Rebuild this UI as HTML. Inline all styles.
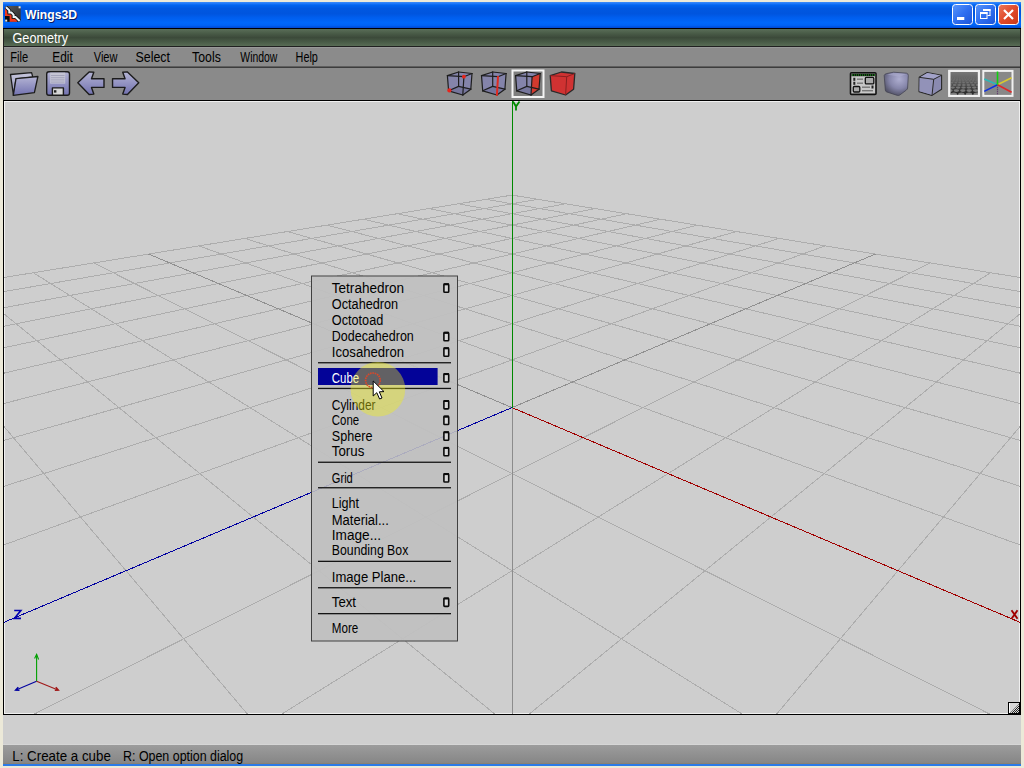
<!DOCTYPE html><html><head><meta charset="utf-8"><style>
html,body{margin:0;padding:0;width:1024px;height:768px;overflow:hidden;background:#ECE9D8}
svg{display:block}
text{font-family:"Liberation Sans",sans-serif}
</style></head><body>
<svg width="1024" height="768" viewBox="0 0 1024 768">
<defs>
<linearGradient id="gTitle" x1="0" y1="0" x2="0" y2="1">
<stop offset="0" stop-color="#3C8CF8"/><stop offset="0.06" stop-color="#1E78FA"/>
<stop offset="0.12" stop-color="#0064F0"/><stop offset="0.25" stop-color="#0057E0"/>
<stop offset="0.45" stop-color="#0055DE"/><stop offset="0.6" stop-color="#005EEE"/>
<stop offset="0.8" stop-color="#0068FA"/><stop offset="0.9" stop-color="#0062F4"/>
<stop offset="1" stop-color="#0048D0"/></linearGradient>
<linearGradient id="gGeom" x1="0" y1="0" x2="0" y2="1">
<stop offset="0" stop-color="#5A6E58"/><stop offset="0.25" stop-color="#4A5C48"/>
<stop offset="0.5" stop-color="#3C4A3A"/><stop offset="0.75" stop-color="#485A46"/>
<stop offset="1" stop-color="#586C55"/></linearGradient>
<linearGradient id="gStatus" x1="0" y1="0" x2="0" y2="1">
<stop offset="0" stop-color="#9c9c9c"/><stop offset="1" stop-color="#858585"/></linearGradient>
<linearGradient id="gMenu" x1="0" y1="0" x2="1" y2="1">
<stop offset="0" stop-color="#c4c4c4"/><stop offset="1" stop-color="#c8c8c8"/></linearGradient>
<linearGradient id="gBtn" x1="0" y1="0" x2="1" y2="1">
<stop offset="0" stop-color="#5a96fa"/><stop offset="0.5" stop-color="#2f6ff0"/><stop offset="1" stop-color="#1c54d8"/></linearGradient>
<linearGradient id="gClose" x1="0" y1="0" x2="1" y2="1">
<stop offset="0" stop-color="#ec7a5c"/><stop offset="0.5" stop-color="#e04a2a"/><stop offset="1" stop-color="#c83818"/></linearGradient>
<linearGradient id="gLav1" x1="0" y1="0" x2="0" y2="1">
<stop offset="0" stop-color="#c8c8dc"/><stop offset="1" stop-color="#8a8ab8"/></linearGradient>
<linearGradient id="gLav2" x1="0" y1="0" x2="0" y2="1">
<stop offset="0" stop-color="#b4b4d4"/><stop offset="1" stop-color="#7272b0"/></linearGradient>
<radialGradient id="gSmooth" cx="0.62" cy="0.3" r="0.8">
<stop offset="0" stop-color="#aeaed0"/><stop offset="0.5" stop-color="#8686aa"/><stop offset="1" stop-color="#444454"/></radialGradient>
<linearGradient id="gGround" x1="0" y1="0" x2="0" y2="1">
<stop offset="0" stop-color="#7a7a7a"/><stop offset="0.4" stop-color="#5e5e5e"/><stop offset="1" stop-color="#1e1e1e"/></linearGradient>
<clipPath id="gclip"><rect x="950.3" y="71.9" width="27.6" height="23"/></clipPath><pattern id="hatch" width="2" height="2" patternUnits="userSpaceOnUse"><rect width="2" height="2" fill="#d8d8d8"/><rect width="1" height="1" fill="#222"/><rect x="1" y="1" width="1" height="1" fill="#222"/></pattern><linearGradient id="gIcon" x1="0" y1="0" x2="1" y2="1"><stop offset="0" stop-color="#5a5a5a"/><stop offset="1" stop-color="#2a2a2a"/></linearGradient><clipPath id="menuclip"><rect x="312" y="276.5" width="145" height="364"/></clipPath><clipPath id="vp"><rect x="4" y="101" width="1016" height="613"/></clipPath>
</defs>

<rect x="3" y="28" width="1018" height="687" fill="#202020"/>
<rect x="3" y="2" width="1018" height="26" fill="url(#gTitle)"/>
<rect x="3" y="28" width="1018" height="1" fill="#000"/>
<text x="26" y="20.3" font-size="13.5" font-weight="bold" fill="#0a1a60" textLength="52" lengthAdjust="spacingAndGlyphs">Wings3D</text>
<text x="25" y="19.3" font-size="13.5" font-weight="bold" fill="#fff" textLength="52" lengthAdjust="spacingAndGlyphs">Wings3D</text>
<rect x="4" y="29" width="1016" height="17" fill="url(#gGeom)"/>
<text x="12.5" y="43" font-size="14" fill="#fff" textLength="55.6" lengthAdjust="spacingAndGlyphs">Geometry</text>
<rect x="4" y="47" width="1016" height="20" fill="#8b8b8b"/>
<rect x="4" y="47" width="1016" height="1" fill="#999"/>
<rect x="4" y="66" width="1016" height="1" fill="#5e5e5e"/>
<rect x="4" y="67" width="1016" height="1" fill="#3c3c3c"/>
<text x="10.2" y="62" font-size="14" fill="#000" textLength="17.9" lengthAdjust="spacingAndGlyphs">File</text>
<text x="52.3" y="62" font-size="14" fill="#000" textLength="20.4" lengthAdjust="spacingAndGlyphs">Edit</text>
<text x="93.75" y="62" font-size="14" fill="#000" textLength="23.75" lengthAdjust="spacingAndGlyphs">View</text>
<text x="135.5" y="62" font-size="14" fill="#000" textLength="34.5" lengthAdjust="spacingAndGlyphs">Select</text>
<text x="192.1" y="62" font-size="14" fill="#000" textLength="28.7" lengthAdjust="spacingAndGlyphs">Tools</text>
<text x="240.3" y="62" font-size="14" fill="#000" textLength="37.1" lengthAdjust="spacingAndGlyphs">Window</text>
<text x="295.6" y="62" font-size="14" fill="#000" textLength="22.3" lengthAdjust="spacingAndGlyphs">Help</text>
<rect x="4" y="68" width="1016" height="32" fill="#8a8a8a"/>
<rect x="3" y="100" width="1018" height="615" fill="#000"/>
<rect x="4" y="101" width="1016" height="613" fill="#f0f0f0"/>
<rect x="5" y="102" width="1014" height="611" fill="#cecece"/>
<g clip-path="url(#vp)" shape-rendering="crispEdges"><line x1="512.00" y1="195.11" x2="-798.13" y2="407.60" stroke="#adadad" stroke-width="1.0"/><line x1="512.00" y1="195.11" x2="1822.13" y2="407.60" stroke="#adadad" stroke-width="1.0"/><line x1="537.94" y1="199.31" x2="-841.27" y2="437.70" stroke="#adadad" stroke-width="1.0"/><line x1="486.06" y1="199.31" x2="1865.27" y2="437.70" stroke="#adadad" stroke-width="1.0"/><line x1="565.58" y1="203.80" x2="-892.66" y2="473.56" stroke="#adadad" stroke-width="1.0"/><line x1="458.42" y1="203.80" x2="1916.66" y2="473.56" stroke="#adadad" stroke-width="1.0"/><line x1="595.10" y1="208.58" x2="-954.91" y2="517.00" stroke="#adadad" stroke-width="1.0"/><line x1="428.90" y1="208.58" x2="1978.91" y2="517.00" stroke="#adadad" stroke-width="1.0"/><line x1="626.70" y1="213.71" x2="-1031.90" y2="570.72" stroke="#adadad" stroke-width="1.0"/><line x1="397.30" y1="213.71" x2="2055.90" y2="570.72" stroke="#adadad" stroke-width="1.0"/><line x1="660.59" y1="219.21" x2="-1129.53" y2="638.85" stroke="#adadad" stroke-width="1.0"/><line x1="363.41" y1="219.21" x2="2153.53" y2="638.85" stroke="#adadad" stroke-width="1.0"/><line x1="697.05" y1="225.12" x2="-1257.41" y2="728.08" stroke="#adadad" stroke-width="1.0"/><line x1="326.95" y1="225.12" x2="2281.41" y2="728.08" stroke="#adadad" stroke-width="1.0"/><line x1="736.37" y1="231.50" x2="-1432.16" y2="850.02" stroke="#adadad" stroke-width="1.0"/><line x1="287.63" y1="231.50" x2="2456.16" y2="850.02" stroke="#adadad" stroke-width="1.0"/><line x1="778.91" y1="238.40" x2="-1685.35" y2="1026.69" stroke="#adadad" stroke-width="1.0"/><line x1="245.09" y1="238.40" x2="2709.35" y2="1026.69" stroke="#adadad" stroke-width="1.0"/><line x1="825.08" y1="245.89" x2="-2085.06" y2="1305.61" stroke="#adadad" stroke-width="1.0"/><line x1="198.92" y1="245.89" x2="3109.06" y2="1305.61" stroke="#adadad" stroke-width="1.0"/><line x1="930.32" y1="262.95" x2="-4531.67" y2="3012.83" stroke="#adadad" stroke-width="1.0"/><line x1="93.68" y1="262.95" x2="5555.67" y2="3012.83" stroke="#adadad" stroke-width="1.0"/><line x1="990.66" y1="272.74" x2="-13803.22" y2="9482.41" stroke="#adadad" stroke-width="1.0"/><line x1="33.34" y1="272.74" x2="14827.22" y2="9482.41" stroke="#adadad" stroke-width="1.0"/><line x1="1057.20" y1="283.53" x2="-32430.77" y2="27589.18" stroke="#adadad" stroke-width="1.0"/><line x1="-33.20" y1="283.53" x2="33454.77" y2="27589.18" stroke="#adadad" stroke-width="1.0"/><line x1="1130.95" y1="295.50" x2="-21972.66" y2="27589.18" stroke="#adadad" stroke-width="1.0"/><line x1="-106.95" y1="295.50" x2="22996.66" y2="27589.18" stroke="#adadad" stroke-width="1.0"/><line x1="1213.15" y1="308.83" x2="-11514.55" y2="27589.18" stroke="#adadad" stroke-width="1.0"/><line x1="-189.15" y1="308.83" x2="12538.55" y2="27589.18" stroke="#adadad" stroke-width="1.0"/><line x1="1305.34" y1="323.78" x2="-1056.44" y2="27589.18" stroke="#adadad" stroke-width="1.0"/><line x1="-281.34" y1="323.78" x2="2080.44" y2="27589.18" stroke="#adadad" stroke-width="1.0"/><line x1="1409.46" y1="340.67" x2="9401.67" y2="27589.18" stroke="#adadad" stroke-width="1.0"/><line x1="-385.46" y1="340.67" x2="-8377.67" y2="27589.18" stroke="#adadad" stroke-width="1.0"/><line x1="1527.98" y1="359.89" x2="19859.78" y2="27589.18" stroke="#adadad" stroke-width="1.0"/><line x1="-503.98" y1="359.89" x2="-18835.78" y2="27589.18" stroke="#adadad" stroke-width="1.0"/><line x1="1664.13" y1="381.97" x2="30317.88" y2="27589.18" stroke="#adadad" stroke-width="1.0"/><line x1="-640.13" y1="381.97" x2="-29293.88" y2="27589.18" stroke="#adadad" stroke-width="1.0"/><line x1="1822.13" y1="407.60" x2="40775.99" y2="27589.18" stroke="#adadad" stroke-width="1.0"/><line x1="-798.13" y1="407.60" x2="-39751.99" y2="27589.18" stroke="#adadad" stroke-width="1.0"/><line x1="148.65" y1="254.04" x2="512.00" y2="407.60" stroke="#909090" stroke-width="1.0"/><line x1="875.35" y1="254.04" x2="512.00" y2="407.60" stroke="#909090" stroke-width="1.0"/><line x1="512.00" y1="407.60" x2="512.00" y2="1741.51" stroke="#8c8c8c" stroke-width="1.0"/><line x1="512.00" y1="407.60" x2="64829.10" y2="27589.18" stroke="#a00000" stroke-width="1.0"/><line x1="512.00" y1="407.60" x2="-63805.10" y2="27589.18" stroke="#0000a0" stroke-width="1.0"/><line x1="512.00" y1="407.60" x2="512.00" y2="-124598.04" stroke="#008800" stroke-width="1.0"/></g>
<g font-family="Liberation Sans" font-weight="bold">
<path d="M513 101.5 L516 106.5 L519.5 101.5 M516 106.5 V110.5" fill="none" stroke="#008a00" stroke-width="1.8"/>
<path d="M1011.5 610.3 L1017.5 618.7 M1017.5 610.3 L1011.5 618.7" fill="none" stroke="#a00000" stroke-width="1.9"/>
<path d="M14.2 610.5 H20.8 L14.5 618.3 H21" fill="none" stroke="#0000b0" stroke-width="1.7"/>
</g>
<g stroke-width="1.1" fill="none">
<path d="M36.6 681.2 V654.5" stroke="#00a000"/><path d="M34.6 658.5 L36.6 654.3 L38.6 659.5" stroke="#00a000" stroke-width="1.1"/>
<path d="M36.6 681.2 L16 690" stroke="#0000a0"/><path d="M18.3 687.3 L15.8 690 L19.5 690.2" stroke="#0000a0" stroke-width="1.6"/>
<path d="M36.6 681.2 L58 690" stroke="#a01818"/><path d="M54.8 690.2 L58.2 690 L55.8 687.3" stroke="#a01818" stroke-width="1.6"/>
</g>
<rect x="1008" y="702" width="12" height="12" fill="#000"/><rect x="1009" y="703" width="10" height="10" fill="#d8d8d8"/><rect x="1009" y="703" width="1" height="10" fill="#fff"/><polygon points="1019,704 1019,713 1010,713" fill="url(#hatch)"/>
<rect x="3" y="715" width="1018" height="30" fill="#cfcfcf"/>
<rect x="3" y="744" width="1018" height="1" fill="#d6d6d6"/>
<rect x="3" y="745" width="1018" height="19" fill="url(#gStatus)"/>
<rect x="3" y="763.5" width="1018" height="0.7" fill="#8a7a60"/>
<rect x="3" y="764" width="1018" height="2" fill="#2a7ae8"/>
<text x="12.3" y="760.6" font-size="14" fill="#000" textLength="98.5" lengthAdjust="spacingAndGlyphs">L: Create a cube</text>
<text x="123" y="760.6" font-size="14" fill="#000" textLength="120.2" lengthAdjust="spacingAndGlyphs">R: Open option dialog</text>
<g>
<rect x="5" y="6.1" width="15.7" height="15.6" rx="2" fill="url(#gIcon)"/>
<path d="M5 9 H7 V13.6 H11.6 V18.6 H17 V21.7 H9.5 V16 H5 Z" fill="#f0381c"/>
<rect x="5" y="16" width="4.5" height="5.7" fill="#0c0c0c"/>
<path d="M6 7.2 L9.3 10.4 V12.6 H11.5 L13.6 14.8 V17 H15.5 L19.6 21" fill="none" stroke="#101010" stroke-width="3.6" stroke-linejoin="miter"/>
<path d="M6 7.2 L9.3 10.4 V12.6 H11.5 L13.6 14.8 V17 H15.5 L19.6 21" fill="none" stroke="#eef4f8" stroke-width="2" stroke-linejoin="miter"/>
<rect x="18.6" y="6.3" width="2" height="2" fill="#e8e8e8"/>
<rect x="5.2" y="19.6" width="2" height="2" fill="#e8e8e8"/>
</g>
<g><rect x="952.5" y="4.5" width="20" height="20" rx="3" fill="url(#gBtn)" stroke="#fff" stroke-width="1"/><rect x="957" y="17" width="7.3" height="3" fill="#fff"/></g>
<g><rect x="975.5" y="4.5" width="20" height="20" rx="3" fill="url(#gBtn)" stroke="#fff" stroke-width="1"/><rect x="980.5" y="12.5" width="6.5" height="6" fill="none" stroke="#fff" stroke-width="1"/><rect x="980" y="12" width="7.5" height="2" fill="#fff"/><rect x="983" y="9" width="7.5" height="2" fill="#fff"/><rect x="989.5" y="9" width="1" height="6.5" fill="#fff"/><rect x="987.5" y="15" width="3" height="1" fill="#fff"/></g>
<g><rect x="998.5" y="4.5" width="20" height="20" rx="3" fill="url(#gClose)" stroke="#fff" stroke-width="1"/><path d="M1004 10 L1013 19 M1013 10 L1004 19" stroke="#fff" stroke-width="2.2"/></g>
<g stroke="#1c1c1c" stroke-linejoin="round">
<polygon points="10.5,74.5 31.6,72.6 32.8,77.2 16,78.8 13.5,95.3" fill="url(#gLav1)" stroke-width="1.3"/>
<polygon points="16,78.6 37.9,76.5 34.4,92.6 13.3,95.3" fill="url(#gLav2)" stroke-width="1.3"/>
<rect x="46.7" y="71.7" width="22.8" height="23.6" rx="2.2" fill="url(#gLav2)" stroke-width="1.4"/>
<rect x="50.2" y="72.6" width="15" height="11" fill="#c4c4d4" stroke="none"/>
<path d="M51 75.5 H64.5 M51 77.7 H64.5 M51 79.9 H64.5 M51 82.1 H64.5" stroke="#9a9ab4" stroke-width="0.8"/>
<rect x="52.4" y="87.9" width="11" height="7.4" fill="#d6d6d6" stroke-width="1.4"/>
<rect x="54" y="90.2" width="2.4" height="2.4" fill="#222" stroke="none"/>
<polygon points="77.8,82.75 89.1,71.9 93.8,72.3 91.5,78.8 104,78.8 104,87.4 91.5,87.4 93.8,94.1 89.1,94.5" fill="url(#gLav2)" stroke-width="1.4"/>
<polygon points="138.75,82.75 127.45,71.9 122.75,72.3 125.05,78.8 112.55,78.8 112.55,87.4 125.05,87.4 122.75,94.1 127.45,94.5" fill="url(#gLav2)" stroke-width="1.4"/>
</g>
<rect x="512.5" y="70.5" width="31" height="26.5" fill="#7e7e7e" stroke="#f4f4f4" stroke-width="2"/>
<polygon points="447.4,75.6 458.6,72.0 472.0,73.5 470.8,89.2 462.8,95.0 448.6,90.8" fill="#8484aa" stroke="none"/><polygon points="448.6,90.8 458.6,86.4 470.8,89.2 462.8,95.0" fill="#76769c" stroke="none"/><line x1="447.4" y1="75.6" x2="458.6" y2="72.0" stroke="#1e1e1e" stroke-width="1.2" stroke-linecap="round"/><line x1="458.6" y1="72.0" x2="472.0" y2="73.5" stroke="#1e1e1e" stroke-width="1.2" stroke-linecap="round"/><line x1="472.0" y1="73.5" x2="463.9" y2="76.7" stroke="#1e1e1e" stroke-width="1.2" stroke-linecap="round"/><line x1="463.9" y1="76.7" x2="447.4" y2="75.6" stroke="#1e1e1e" stroke-width="1.2" stroke-linecap="round"/><line x1="448.6" y1="90.8" x2="458.6" y2="86.4" stroke="#1e1e1e" stroke-width="1.2" stroke-linecap="round"/><line x1="458.6" y1="86.4" x2="470.8" y2="89.2" stroke="#1e1e1e" stroke-width="1.2" stroke-linecap="round"/><line x1="470.8" y1="89.2" x2="462.8" y2="95.0" stroke="#1e1e1e" stroke-width="1.2" stroke-linecap="round"/><line x1="462.8" y1="95.0" x2="448.6" y2="90.8" stroke="#1e1e1e" stroke-width="1.2" stroke-linecap="round"/><line x1="447.4" y1="75.6" x2="448.6" y2="90.8" stroke="#1e1e1e" stroke-width="1.2" stroke-linecap="round"/><line x1="458.6" y1="72.0" x2="458.6" y2="86.4" stroke="#1e1e1e" stroke-width="1.2" stroke-linecap="round"/><line x1="472.0" y1="73.5" x2="470.8" y2="89.2" stroke="#1e1e1e" stroke-width="1.2" stroke-linecap="round"/><line x1="463.9" y1="76.7" x2="462.8" y2="95.0" stroke="#1e1e1e" stroke-width="1.2" stroke-linecap="round"/><circle cx="463.9" cy="76.7" r="1.9" fill="#e8241c"/><circle cx="449.40000000000003" cy="90.39999999999999" r="2.1" fill="#e8241c"/>
<polygon points="481.5,75.6 492.7,72.0 506.1,73.5 504.9,89.2 496.9,95.0 482.7,90.8" fill="#8484aa" stroke="none"/><polygon points="482.7,90.8 492.7,86.4 504.9,89.2 496.9,95.0" fill="#76769c" stroke="none"/><line x1="481.5" y1="75.6" x2="492.7" y2="72.0" stroke="#1e1e1e" stroke-width="1.2" stroke-linecap="round"/><line x1="492.7" y1="72.0" x2="506.1" y2="73.5" stroke="#1e1e1e" stroke-width="1.2" stroke-linecap="round"/><line x1="506.1" y1="73.5" x2="498.0" y2="76.7" stroke="#1e1e1e" stroke-width="1.2" stroke-linecap="round"/><line x1="498.0" y1="76.7" x2="481.5" y2="75.6" stroke="#1e1e1e" stroke-width="1.2" stroke-linecap="round"/><line x1="482.7" y1="90.8" x2="492.7" y2="86.4" stroke="#1e1e1e" stroke-width="1.2" stroke-linecap="round"/><line x1="492.7" y1="86.4" x2="504.9" y2="89.2" stroke="#1e1e1e" stroke-width="1.2" stroke-linecap="round"/><line x1="504.9" y1="89.2" x2="496.9" y2="95.0" stroke="#1e1e1e" stroke-width="1.2" stroke-linecap="round"/><line x1="496.9" y1="95.0" x2="482.7" y2="90.8" stroke="#1e1e1e" stroke-width="1.2" stroke-linecap="round"/><line x1="481.5" y1="75.6" x2="482.7" y2="90.8" stroke="#1e1e1e" stroke-width="1.2" stroke-linecap="round"/><line x1="492.7" y1="72.0" x2="492.7" y2="86.4" stroke="#1e1e1e" stroke-width="1.2" stroke-linecap="round"/><line x1="506.1" y1="73.5" x2="504.9" y2="89.2" stroke="#1e1e1e" stroke-width="1.2" stroke-linecap="round"/><line x1="498.0" y1="76.7" x2="496.9" y2="95.0" stroke="#e02a20" stroke-width="2" stroke-linecap="round"/>
<polygon points="515.6,75.6 526.8,72.0 540.2,73.5 539.0,89.2 531.0,95.0 516.8,90.8" fill="#8484aa" stroke="none"/><polygon points="516.8,90.8 526.8,86.4 539.0,89.2 531.0,95.0" fill="#76769c" stroke="none"/><polygon points="532.1,76.7 540.2,73.5 539.0,89.2 531.0,95.0" fill="#d23a2e" stroke="none"/><line x1="515.6" y1="75.6" x2="526.8" y2="72.0" stroke="#1e1e1e" stroke-width="1.2" stroke-linecap="round"/><line x1="526.8" y1="72.0" x2="540.2" y2="73.5" stroke="#1e1e1e" stroke-width="1.2" stroke-linecap="round"/><line x1="540.2" y1="73.5" x2="532.1" y2="76.7" stroke="#1e1e1e" stroke-width="1.2" stroke-linecap="round"/><line x1="532.1" y1="76.7" x2="515.6" y2="75.6" stroke="#1e1e1e" stroke-width="1.2" stroke-linecap="round"/><line x1="516.8" y1="90.8" x2="526.8" y2="86.4" stroke="#1e1e1e" stroke-width="1.2" stroke-linecap="round"/><line x1="526.8" y1="86.4" x2="539.0" y2="89.2" stroke="#1e1e1e" stroke-width="1.2" stroke-linecap="round"/><line x1="539.0" y1="89.2" x2="531.0" y2="95.0" stroke="#1e1e1e" stroke-width="1.2" stroke-linecap="round"/><line x1="531.0" y1="95.0" x2="516.8" y2="90.8" stroke="#1e1e1e" stroke-width="1.2" stroke-linecap="round"/><line x1="515.6" y1="75.6" x2="516.8" y2="90.8" stroke="#1e1e1e" stroke-width="1.2" stroke-linecap="round"/><line x1="526.8" y1="72.0" x2="526.8" y2="86.4" stroke="#1e1e1e" stroke-width="1.2" stroke-linecap="round"/><line x1="540.2" y1="73.5" x2="539.0" y2="89.2" stroke="#1e1e1e" stroke-width="1.2" stroke-linecap="round"/><line x1="532.1" y1="76.7" x2="531.0" y2="95.0" stroke="#1e1e1e" stroke-width="1.2" stroke-linecap="round"/>
<polygon points="550.2,75.6 561.4,72.0 574.8,73.5 573.6,89.2 565.6,95.0 551.4,90.8" fill="#d03232" stroke="#2a2a2a" stroke-width="1.3" stroke-linejoin="round"/><polyline points="550.2,75.6 566.7,76.7 574.8,73.5" fill="none" stroke="#8a2020" stroke-width="1"/><line x1="566.6999999999999" y1="76.7" x2="565.6" y2="95" stroke="#8a2020" stroke-width="1"/>
<g>
<rect x="850.5" y="72.8" width="25.5" height="21.6" rx="1" fill="#c8c8c8" stroke="#111" stroke-width="1.6"/>
<rect x="851.5" y="73.6" width="23.5" height="2.6" fill="#111"/>
<line x1="852" y1="75" x2="875" y2="75" stroke="#1ec81e" stroke-width="1.2" stroke-dasharray="1 1"/>
<rect x="853.3" y="77.8" width="2" height="3" fill="#222"/><rect x="853.3" y="81.8" width="2" height="3" fill="#222"/>
<rect x="857" y="78.5" width="6" height="1.4" fill="#777"/><rect x="857" y="82.5" width="6" height="1.4" fill="#777"/>
<rect x="865.3" y="77.4" width="8.5" height="6.5" rx="1" fill="#aaa" stroke="#111" stroke-width="1.3"/>
<rect x="853.3" y="86.5" width="6.5" height="5.5" rx="1" fill="#aaa" stroke="#111" stroke-width="1.3"/>
<rect x="862" y="86.5" width="8" height="1.4" fill="#777"/><rect x="862" y="90" width="11" height="1.4" fill="#777"/>
<rect x="871.5" y="85.5" width="2" height="3" fill="#222"/>
<path d="M884.2 75.5 Q884.4 74.2 886.5 73.6 L893.7 72.2 L906.5 73.2 Q908.3 73.5 908.3 75.5 L907.6 88 Q907.5 89.2 906.4 90 L899.8 95 Q898.6 95.8 897.4 95.4 L886.8 92 Q885.4 91.5 885.3 90 Z" fill="url(#gSmooth)" stroke="#404050" stroke-width="0.9" stroke-opacity="0.8"/>
<path d="M887 74.6 L893.8 73 L906.5 74 L899.5 76.8 Z" fill="#b4b4d4" fill-opacity="0.45"/>
<polygon points="919.2,77.3 927.2,72.5 941.6,75.2 941.6,89.2 932,95.4 919,91.6" fill="#8a8ab0" stroke="#282828" stroke-width="1.1" stroke-linejoin="round"/>
<polygon points="919.6,77.6 933.6,79.5 932.1,94.9 919.4,91.3" fill="#9292b8"/>
<polygon points="920,77.2 927.3,73 941,75.6 933.7,79" fill="#a2a2c8"/>
<path d="M919.2 77.3 L933.7 79.3 L941.6 75.2 M933.7 79.3 L932 95.4" fill="none" stroke="#2a2a2a" stroke-width="1"/>
<rect x="949.3" y="70.9" width="29.6" height="25" fill="url(#gGround)" stroke="#f0f0f0" stroke-width="2"/>
<g clip-path="url(#gclip)"><ellipse cx="953.80" cy="94.30" rx="3.19" ry="1.70" fill="#9a9a9a" fill-opacity="0.75"/><ellipse cx="961.40" cy="94.30" rx="3.19" ry="1.70" fill="#9a9a9a" fill-opacity="0.75"/><ellipse cx="969.00" cy="94.30" rx="3.19" ry="1.70" fill="#9a9a9a" fill-opacity="0.75"/><ellipse cx="976.60" cy="94.30" rx="3.19" ry="1.70" fill="#9a9a9a" fill-opacity="0.75"/><ellipse cx="950.00" cy="90.60" rx="2.69" ry="1.40" fill="#9a9a9a" fill-opacity="0.7"/><ellipse cx="956.40" cy="90.60" rx="2.69" ry="1.40" fill="#9a9a9a" fill-opacity="0.7"/><ellipse cx="962.80" cy="90.60" rx="2.69" ry="1.40" fill="#9a9a9a" fill-opacity="0.7"/><ellipse cx="969.20" cy="90.60" rx="2.69" ry="1.40" fill="#9a9a9a" fill-opacity="0.7"/><ellipse cx="975.60" cy="90.60" rx="2.69" ry="1.40" fill="#9a9a9a" fill-opacity="0.7"/><ellipse cx="982.00" cy="90.60" rx="2.69" ry="1.40" fill="#9a9a9a" fill-opacity="0.7"/><ellipse cx="952.70" cy="87.60" rx="2.27" ry="1.15" fill="#9a9a9a" fill-opacity="0.6"/><ellipse cx="958.10" cy="87.60" rx="2.27" ry="1.15" fill="#9a9a9a" fill-opacity="0.6"/><ellipse cx="963.50" cy="87.60" rx="2.27" ry="1.15" fill="#9a9a9a" fill-opacity="0.6"/><ellipse cx="968.90" cy="87.60" rx="2.27" ry="1.15" fill="#9a9a9a" fill-opacity="0.6"/><ellipse cx="974.30" cy="87.60" rx="2.27" ry="1.15" fill="#9a9a9a" fill-opacity="0.6"/><ellipse cx="979.70" cy="87.60" rx="2.27" ry="1.15" fill="#9a9a9a" fill-opacity="0.6"/><ellipse cx="950.00" cy="85.00" rx="1.93" ry="0.95" fill="#9a9a9a" fill-opacity="0.5"/><ellipse cx="954.60" cy="85.00" rx="1.93" ry="0.95" fill="#9a9a9a" fill-opacity="0.5"/><ellipse cx="959.20" cy="85.00" rx="1.93" ry="0.95" fill="#9a9a9a" fill-opacity="0.5"/><ellipse cx="963.80" cy="85.00" rx="1.93" ry="0.95" fill="#9a9a9a" fill-opacity="0.5"/><ellipse cx="968.40" cy="85.00" rx="1.93" ry="0.95" fill="#9a9a9a" fill-opacity="0.5"/><ellipse cx="973.00" cy="85.00" rx="1.93" ry="0.95" fill="#9a9a9a" fill-opacity="0.5"/><ellipse cx="977.60" cy="85.00" rx="1.93" ry="0.95" fill="#9a9a9a" fill-opacity="0.5"/><ellipse cx="982.20" cy="85.00" rx="1.93" ry="0.95" fill="#9a9a9a" fill-opacity="0.5"/><ellipse cx="951.95" cy="82.80" rx="1.64" ry="0.80" fill="#9a9a9a" fill-opacity="0.4"/><ellipse cx="955.85" cy="82.80" rx="1.64" ry="0.80" fill="#9a9a9a" fill-opacity="0.4"/><ellipse cx="959.75" cy="82.80" rx="1.64" ry="0.80" fill="#9a9a9a" fill-opacity="0.4"/><ellipse cx="963.65" cy="82.80" rx="1.64" ry="0.80" fill="#9a9a9a" fill-opacity="0.4"/><ellipse cx="967.55" cy="82.80" rx="1.64" ry="0.80" fill="#9a9a9a" fill-opacity="0.4"/><ellipse cx="971.45" cy="82.80" rx="1.64" ry="0.80" fill="#9a9a9a" fill-opacity="0.4"/><ellipse cx="975.35" cy="82.80" rx="1.64" ry="0.80" fill="#9a9a9a" fill-opacity="0.4"/><ellipse cx="979.25" cy="82.80" rx="1.64" ry="0.80" fill="#9a9a9a" fill-opacity="0.4"/><ellipse cx="950.00" cy="80.90" rx="1.39" ry="0.65" fill="#9a9a9a" fill-opacity="0.3"/><ellipse cx="953.30" cy="80.90" rx="1.39" ry="0.65" fill="#9a9a9a" fill-opacity="0.3"/><ellipse cx="956.60" cy="80.90" rx="1.39" ry="0.65" fill="#9a9a9a" fill-opacity="0.3"/><ellipse cx="959.90" cy="80.90" rx="1.39" ry="0.65" fill="#9a9a9a" fill-opacity="0.3"/><ellipse cx="963.20" cy="80.90" rx="1.39" ry="0.65" fill="#9a9a9a" fill-opacity="0.3"/><ellipse cx="966.50" cy="80.90" rx="1.39" ry="0.65" fill="#9a9a9a" fill-opacity="0.3"/><ellipse cx="969.80" cy="80.90" rx="1.39" ry="0.65" fill="#9a9a9a" fill-opacity="0.3"/><ellipse cx="973.10" cy="80.90" rx="1.39" ry="0.65" fill="#9a9a9a" fill-opacity="0.3"/><ellipse cx="976.40" cy="80.90" rx="1.39" ry="0.65" fill="#9a9a9a" fill-opacity="0.3"/><ellipse cx="979.70" cy="80.90" rx="1.39" ry="0.65" fill="#9a9a9a" fill-opacity="0.3"/><ellipse cx="951.40" cy="79.30" rx="1.18" ry="0.55" fill="#9a9a9a" fill-opacity="0.25"/><ellipse cx="954.20" cy="79.30" rx="1.18" ry="0.55" fill="#9a9a9a" fill-opacity="0.25"/><ellipse cx="957.00" cy="79.30" rx="1.18" ry="0.55" fill="#9a9a9a" fill-opacity="0.25"/><ellipse cx="959.80" cy="79.30" rx="1.18" ry="0.55" fill="#9a9a9a" fill-opacity="0.25"/><ellipse cx="962.60" cy="79.30" rx="1.18" ry="0.55" fill="#9a9a9a" fill-opacity="0.25"/><ellipse cx="965.40" cy="79.30" rx="1.18" ry="0.55" fill="#9a9a9a" fill-opacity="0.25"/><ellipse cx="968.20" cy="79.30" rx="1.18" ry="0.55" fill="#9a9a9a" fill-opacity="0.25"/><ellipse cx="971.00" cy="79.30" rx="1.18" ry="0.55" fill="#9a9a9a" fill-opacity="0.25"/><ellipse cx="973.80" cy="79.30" rx="1.18" ry="0.55" fill="#9a9a9a" fill-opacity="0.25"/><ellipse cx="976.60" cy="79.30" rx="1.18" ry="0.55" fill="#9a9a9a" fill-opacity="0.25"/><ellipse cx="979.40" cy="79.30" rx="1.18" ry="0.55" fill="#9a9a9a" fill-opacity="0.25"/><ellipse cx="950.00" cy="77.90" rx="1.01" ry="0.50" fill="#9a9a9a" fill-opacity="0.2"/><ellipse cx="952.40" cy="77.90" rx="1.01" ry="0.50" fill="#9a9a9a" fill-opacity="0.2"/><ellipse cx="954.80" cy="77.90" rx="1.01" ry="0.50" fill="#9a9a9a" fill-opacity="0.2"/><ellipse cx="957.20" cy="77.90" rx="1.01" ry="0.50" fill="#9a9a9a" fill-opacity="0.2"/><ellipse cx="959.60" cy="77.90" rx="1.01" ry="0.50" fill="#9a9a9a" fill-opacity="0.2"/><ellipse cx="962.00" cy="77.90" rx="1.01" ry="0.50" fill="#9a9a9a" fill-opacity="0.2"/><ellipse cx="964.40" cy="77.90" rx="1.01" ry="0.50" fill="#9a9a9a" fill-opacity="0.2"/><ellipse cx="966.80" cy="77.90" rx="1.01" ry="0.50" fill="#9a9a9a" fill-opacity="0.2"/><ellipse cx="969.20" cy="77.90" rx="1.01" ry="0.50" fill="#9a9a9a" fill-opacity="0.2"/><ellipse cx="971.60" cy="77.90" rx="1.01" ry="0.50" fill="#9a9a9a" fill-opacity="0.2"/><ellipse cx="974.00" cy="77.90" rx="1.01" ry="0.50" fill="#9a9a9a" fill-opacity="0.2"/><ellipse cx="976.40" cy="77.90" rx="1.01" ry="0.50" fill="#9a9a9a" fill-opacity="0.2"/><ellipse cx="978.80" cy="77.90" rx="1.01" ry="0.50" fill="#9a9a9a" fill-opacity="0.2"/><ellipse cx="981.20" cy="77.90" rx="1.01" ry="0.50" fill="#9a9a9a" fill-opacity="0.2"/></g>
<rect x="949.3" y="70.9" width="29.6" height="25" fill="none" stroke="#f0f0f0" stroke-width="2"/>
<rect x="983.3" y="70.9" width="29.2" height="25" fill="#888" stroke="#f0f0f0" stroke-width="2"/>
<line x1="997.5" y1="84.75" x2="997.5" y2="95" stroke="#5a2a6a" stroke-width="1.2" stroke-dasharray="1 1"/>
<line x1="997.5" y1="84.75" x2="984.2" y2="78.9" stroke="#2ab8b8" stroke-width="1.6"/>
<line x1="997.5" y1="84.75" x2="1011.6" y2="77.7" stroke="#d8c830" stroke-width="1.6"/>
<line x1="997.5" y1="84.75" x2="984.2" y2="91.4" stroke="#1030e0" stroke-width="1.6"/>
<line x1="997.5" y1="84.75" x2="1011.6" y2="92.2" stroke="#e02828" stroke-width="1.6"/>
<line x1="997.5" y1="84.75" x2="997.5" y2="71.5" stroke="#10d010" stroke-width="1.6"/>
</g>
<rect x="311.5" y="276" width="146" height="365" fill="#c2c2c2" stroke="#404040" stroke-width="1"/>
<g clip-path="url(#menuclip)" opacity="0.11" shape-rendering="crispEdges"><line x1="512.00" y1="195.11" x2="-798.13" y2="407.60" stroke="#adadad" stroke-width="1.0"/><line x1="512.00" y1="195.11" x2="1822.13" y2="407.60" stroke="#adadad" stroke-width="1.0"/><line x1="537.94" y1="199.31" x2="-841.27" y2="437.70" stroke="#adadad" stroke-width="1.0"/><line x1="486.06" y1="199.31" x2="1865.27" y2="437.70" stroke="#adadad" stroke-width="1.0"/><line x1="565.58" y1="203.80" x2="-892.66" y2="473.56" stroke="#adadad" stroke-width="1.0"/><line x1="458.42" y1="203.80" x2="1916.66" y2="473.56" stroke="#adadad" stroke-width="1.0"/><line x1="595.10" y1="208.58" x2="-954.91" y2="517.00" stroke="#adadad" stroke-width="1.0"/><line x1="428.90" y1="208.58" x2="1978.91" y2="517.00" stroke="#adadad" stroke-width="1.0"/><line x1="626.70" y1="213.71" x2="-1031.90" y2="570.72" stroke="#adadad" stroke-width="1.0"/><line x1="397.30" y1="213.71" x2="2055.90" y2="570.72" stroke="#adadad" stroke-width="1.0"/><line x1="660.59" y1="219.21" x2="-1129.53" y2="638.85" stroke="#adadad" stroke-width="1.0"/><line x1="363.41" y1="219.21" x2="2153.53" y2="638.85" stroke="#adadad" stroke-width="1.0"/><line x1="697.05" y1="225.12" x2="-1257.41" y2="728.08" stroke="#adadad" stroke-width="1.0"/><line x1="326.95" y1="225.12" x2="2281.41" y2="728.08" stroke="#adadad" stroke-width="1.0"/><line x1="736.37" y1="231.50" x2="-1432.16" y2="850.02" stroke="#adadad" stroke-width="1.0"/><line x1="287.63" y1="231.50" x2="2456.16" y2="850.02" stroke="#adadad" stroke-width="1.0"/><line x1="778.91" y1="238.40" x2="-1685.35" y2="1026.69" stroke="#adadad" stroke-width="1.0"/><line x1="245.09" y1="238.40" x2="2709.35" y2="1026.69" stroke="#adadad" stroke-width="1.0"/><line x1="825.08" y1="245.89" x2="-2085.06" y2="1305.61" stroke="#adadad" stroke-width="1.0"/><line x1="198.92" y1="245.89" x2="3109.06" y2="1305.61" stroke="#adadad" stroke-width="1.0"/><line x1="930.32" y1="262.95" x2="-4531.67" y2="3012.83" stroke="#adadad" stroke-width="1.0"/><line x1="93.68" y1="262.95" x2="5555.67" y2="3012.83" stroke="#adadad" stroke-width="1.0"/><line x1="990.66" y1="272.74" x2="-13803.22" y2="9482.41" stroke="#adadad" stroke-width="1.0"/><line x1="33.34" y1="272.74" x2="14827.22" y2="9482.41" stroke="#adadad" stroke-width="1.0"/><line x1="1057.20" y1="283.53" x2="-32430.77" y2="27589.18" stroke="#adadad" stroke-width="1.0"/><line x1="-33.20" y1="283.53" x2="33454.77" y2="27589.18" stroke="#adadad" stroke-width="1.0"/><line x1="1130.95" y1="295.50" x2="-21972.66" y2="27589.18" stroke="#adadad" stroke-width="1.0"/><line x1="-106.95" y1="295.50" x2="22996.66" y2="27589.18" stroke="#adadad" stroke-width="1.0"/><line x1="1213.15" y1="308.83" x2="-11514.55" y2="27589.18" stroke="#adadad" stroke-width="1.0"/><line x1="-189.15" y1="308.83" x2="12538.55" y2="27589.18" stroke="#adadad" stroke-width="1.0"/><line x1="1305.34" y1="323.78" x2="-1056.44" y2="27589.18" stroke="#adadad" stroke-width="1.0"/><line x1="-281.34" y1="323.78" x2="2080.44" y2="27589.18" stroke="#adadad" stroke-width="1.0"/><line x1="1409.46" y1="340.67" x2="9401.67" y2="27589.18" stroke="#adadad" stroke-width="1.0"/><line x1="-385.46" y1="340.67" x2="-8377.67" y2="27589.18" stroke="#adadad" stroke-width="1.0"/><line x1="1527.98" y1="359.89" x2="19859.78" y2="27589.18" stroke="#adadad" stroke-width="1.0"/><line x1="-503.98" y1="359.89" x2="-18835.78" y2="27589.18" stroke="#adadad" stroke-width="1.0"/><line x1="1664.13" y1="381.97" x2="30317.88" y2="27589.18" stroke="#adadad" stroke-width="1.0"/><line x1="-640.13" y1="381.97" x2="-29293.88" y2="27589.18" stroke="#adadad" stroke-width="1.0"/><line x1="1822.13" y1="407.60" x2="40775.99" y2="27589.18" stroke="#adadad" stroke-width="1.0"/><line x1="-798.13" y1="407.60" x2="-39751.99" y2="27589.18" stroke="#adadad" stroke-width="1.0"/><line x1="148.65" y1="254.04" x2="512.00" y2="407.60" stroke="#909090" stroke-width="1.0"/><line x1="875.35" y1="254.04" x2="512.00" y2="407.60" stroke="#909090" stroke-width="1.0"/><line x1="512.00" y1="407.60" x2="512.00" y2="1741.51" stroke="#8c8c8c" stroke-width="1.0"/><line x1="512.00" y1="407.60" x2="64829.10" y2="27589.18" stroke="#a00000" stroke-width="1.0"/><line x1="512.00" y1="407.60" x2="-63805.10" y2="27589.18" stroke="#0000a0" stroke-width="1.0"/><line x1="512.00" y1="407.60" x2="512.00" y2="-124598.04" stroke="#008800" stroke-width="1.0"/></g>
<rect x="318" y="368" width="119.6" height="17" fill="#030398"/>
<text x="331.8" y="292.8" font-size="14" fill="#000" textLength="72.3" lengthAdjust="spacingAndGlyphs">Tetrahedron</text>
<rect x="443.9" y="284.1" width="4.8" height="8.1" rx="0.8" fill="#d8d8d8" stroke="#0a0a0a" stroke-width="1.6"/><rect x="443.6" y="283.3" width="5.4" height="2" fill="#0a0a0a"/>
<text x="331.8" y="309.2" font-size="14" fill="#000" textLength="66.4" lengthAdjust="spacingAndGlyphs">Octahedron</text>
<text x="331.8" y="324.8" font-size="14" fill="#000" textLength="51.5" lengthAdjust="spacingAndGlyphs">Octotoad</text>
<text x="331.8" y="341.3" font-size="14" fill="#000" textLength="82" lengthAdjust="spacingAndGlyphs">Dodecahedron</text>
<rect x="443.9" y="332.6" width="4.8" height="8.1" rx="0.8" fill="#d8d8d8" stroke="#0a0a0a" stroke-width="1.6"/><rect x="443.6" y="331.8" width="5.4" height="2" fill="#0a0a0a"/>
<text x="331.8" y="356.8" font-size="14" fill="#000" textLength="72.3" lengthAdjust="spacingAndGlyphs">Icosahedron</text>
<rect x="443.9" y="348.1" width="4.8" height="8.1" rx="0.8" fill="#d8d8d8" stroke="#0a0a0a" stroke-width="1.6"/><rect x="443.6" y="347.3" width="5.4" height="2" fill="#0a0a0a"/>
<text x="331.8" y="382.6" font-size="14" fill="#fff" textLength="27.3" lengthAdjust="spacingAndGlyphs">Cube</text>
<rect x="443.9" y="373.9" width="4.8" height="8.1" rx="0.8" fill="#d8d8d8" stroke="#0a0a0a" stroke-width="1.6"/><rect x="443.6" y="373.1" width="5.4" height="2" fill="#0a0a0a"/>
<text x="331.8" y="409.5" font-size="14" fill="#000" textLength="43.7" lengthAdjust="spacingAndGlyphs">Cylinder</text>
<rect x="443.9" y="400.8" width="4.8" height="8.1" rx="0.8" fill="#d8d8d8" stroke="#0a0a0a" stroke-width="1.6"/><rect x="443.6" y="400.0" width="5.4" height="2" fill="#0a0a0a"/>
<text x="331.8" y="425.1" font-size="14" fill="#000" textLength="27.3" lengthAdjust="spacingAndGlyphs">Cone</text>
<rect x="443.9" y="416.4" width="4.8" height="8.1" rx="0.8" fill="#d8d8d8" stroke="#0a0a0a" stroke-width="1.6"/><rect x="443.6" y="415.6" width="5.4" height="2" fill="#0a0a0a"/>
<text x="331.8" y="440.8" font-size="14" fill="#000" textLength="40.6" lengthAdjust="spacingAndGlyphs">Sphere</text>
<rect x="443.9" y="432.1" width="4.8" height="8.1" rx="0.8" fill="#d8d8d8" stroke="#0a0a0a" stroke-width="1.6"/><rect x="443.6" y="431.3" width="5.4" height="2" fill="#0a0a0a"/>
<text x="331.8" y="456.4" font-size="14" fill="#000" textLength="32.5" lengthAdjust="spacingAndGlyphs">Torus</text>
<rect x="443.9" y="447.7" width="4.8" height="8.1" rx="0.8" fill="#d8d8d8" stroke="#0a0a0a" stroke-width="1.6"/><rect x="443.6" y="446.9" width="5.4" height="2" fill="#0a0a0a"/>
<text x="331.8" y="482.6" font-size="14" fill="#000" textLength="21" lengthAdjust="spacingAndGlyphs">Grid</text>
<rect x="443.9" y="473.9" width="4.8" height="8.1" rx="0.8" fill="#d8d8d8" stroke="#0a0a0a" stroke-width="1.6"/><rect x="443.6" y="473.1" width="5.4" height="2" fill="#0a0a0a"/>
<text x="331.8" y="508.4" font-size="14" fill="#000" textLength="27.3" lengthAdjust="spacingAndGlyphs">Light</text>
<text x="331.8" y="524.8" font-size="14" fill="#000" textLength="57" lengthAdjust="spacingAndGlyphs">Material...</text>
<text x="331.8" y="540.1" font-size="14" fill="#000" textLength="49.2" lengthAdjust="spacingAndGlyphs">Image...</text>
<text x="331.8" y="555.3" font-size="14" fill="#000" textLength="76.5" lengthAdjust="spacingAndGlyphs">Bounding Box</text>
<text x="331.8" y="581.5" font-size="14" fill="#000" textLength="84.4" lengthAdjust="spacingAndGlyphs">Image Plane...</text>
<text x="331.8" y="607.0" font-size="14" fill="#000" textLength="24.2" lengthAdjust="spacingAndGlyphs">Text</text>
<rect x="443.9" y="598.3" width="4.8" height="8.1" rx="0.8" fill="#d8d8d8" stroke="#0a0a0a" stroke-width="1.6"/><rect x="443.6" y="597.5" width="5.4" height="2" fill="#0a0a0a"/>
<text x="331.8" y="633.1" font-size="14" fill="#000" textLength="26.5" lengthAdjust="spacingAndGlyphs">More</text>
<rect x="318" y="362.1" width="133" height="1.3" fill="#141414"/>
<rect x="318" y="387.8" width="133" height="1.3" fill="#141414"/>
<rect x="318" y="461.6" width="133" height="1.3" fill="#141414"/>
<rect x="318" y="487.1" width="133" height="1.3" fill="#141414"/>
<rect x="318" y="560.7" width="133" height="1.3" fill="#141414"/>
<rect x="318" y="587.1" width="133" height="1.3" fill="#141414"/>
<rect x="318" y="613.0" width="133" height="1.3" fill="#141414"/>
<circle cx="377.9" cy="389.2" r="27.3" fill="#f3f017" fill-opacity="0.40"/>
<circle cx="372.9" cy="380.3" r="7.3" fill="none" stroke="#d8482a" stroke-width="1.7" stroke-dasharray="1.6 0.8"/>
<path d="M373.2 381 L373.2 396 L376.8 392.7 L379.6 399 L382 398 L379.3 391.8 L384 391.6 Z" fill="#fff" stroke="#000" stroke-width="1" stroke-linejoin="round"/>
</svg></body></html>
